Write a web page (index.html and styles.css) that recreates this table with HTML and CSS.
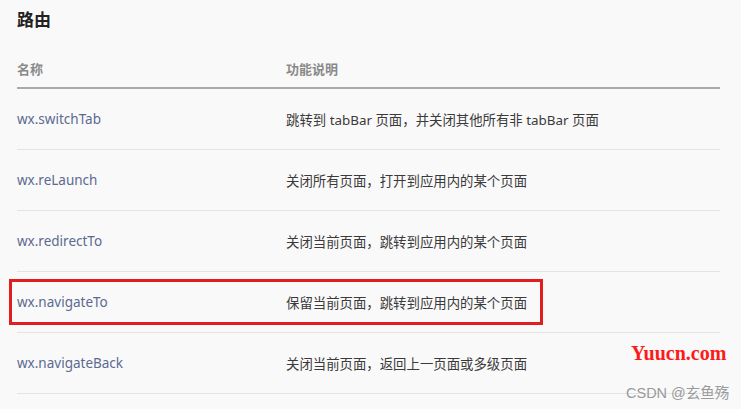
FILE: index.html
```html
<!DOCTYPE html>
<html lang="zh">
<head>
<meta charset="utf-8">
<link rel="stylesheet" href="styles.css">
</head>
<body>
<div class="page">
  <h2 class="title">路由</h2>
  <div class="table">
    <div class="row head">
      <div class="c1">名称</div>
      <div class="c2">功能说明</div>
    </div>
    <div class="row">
      <div class="c1 name">wx.switchTab</div>
      <div class="c2">跳转到 tabBar 页面，并关闭其他所有非 tabBar 页面</div>
    </div>
    <div class="row">
      <div class="c1 name">wx.reLaunch</div>
      <div class="c2">关闭所有页面，打开到应用内的某个页面</div>
    </div>
    <div class="row">
      <div class="c1 name">wx.redirectTo</div>
      <div class="c2">关闭当前页面，跳转到应用内的某个页面</div>
    </div>
    <div class="row">
      <div class="c1 name">wx.navigateTo</div>
      <div class="c2">保留当前页面，跳转到应用内的某个页面</div>
    </div>
    <div class="row">
      <div class="c1 name">wx.navigateBack</div>
      <div class="c2">关闭当前页面，返回上一页面或多级页面</div>
    </div>
  </div>
  <div class="highlight"></div>
  <div class="mark-yuucn">Yuucn.com</div>
  <div class="mark-csdn">CSDN @玄鱼殇</div>
</div>
</body>
</html>
```
FILE: styles.css
```css
html, body {
  margin: 0;
  padding: 0;
  background: #f9f9f9;
}
body {
  font-family: "Noto Sans", "Noto Sans CJK SC", sans-serif;
  color: #333;
}
.page {
  position: relative;
  width: 741px;
  height: 409px;
  overflow: hidden;
  padding: 0 0 0 17px;
  box-sizing: border-box;
}
.title {
  margin: 0;
  padding-top: 8px;
  height: 41px;
  font-size: 17px;
  line-height: 24px;
  font-weight: 700;
  color: #222;
}
.table {
  width: 703px;
}
.row {
  display: flex;
  align-items: center;
  height: 60px;
  border-bottom: 1px solid #e4e4e4;
}
.row.head {
  height: 38px;
  border-bottom: 2px solid #a9a9a9;
  font-size: 13px;
  font-weight: 700;
  color: #8a8a8a;
}
.c1 {
  width: 269px;
  flex: none;
}
.c2 {
  flex: 1;
  font-size: 13.4px;
  color: #3a3a3a;
}
.head .c2 {
  font-size: 13px;
  color: #8a8a8a;
}
.name {
  font-size: 13.5px;
  color: #5c6a91;
}
.highlight {
  position: absolute;
  left: 9px;
  top: 279px;
  width: 534px;
  height: 46px;
  box-sizing: border-box;
  border: 3px solid #e21d1d;
}
.mark-yuucn {
  position: absolute;
  left: 631px;
  top: 341px;
  font-family: "Liberation Serif", serif;
  font-weight: 700;
  font-size: 20px;
  line-height: 24px;
  color: #ff1a1a;
}
.mark-csdn {
  position: absolute;
  left: 626px;
  top: 383px;
  font-family: "Liberation Sans", "Noto Sans CJK SC", sans-serif;
  font-size: 14.5px;
  line-height: 20px;
  color: #9a9a9a;
}
```
